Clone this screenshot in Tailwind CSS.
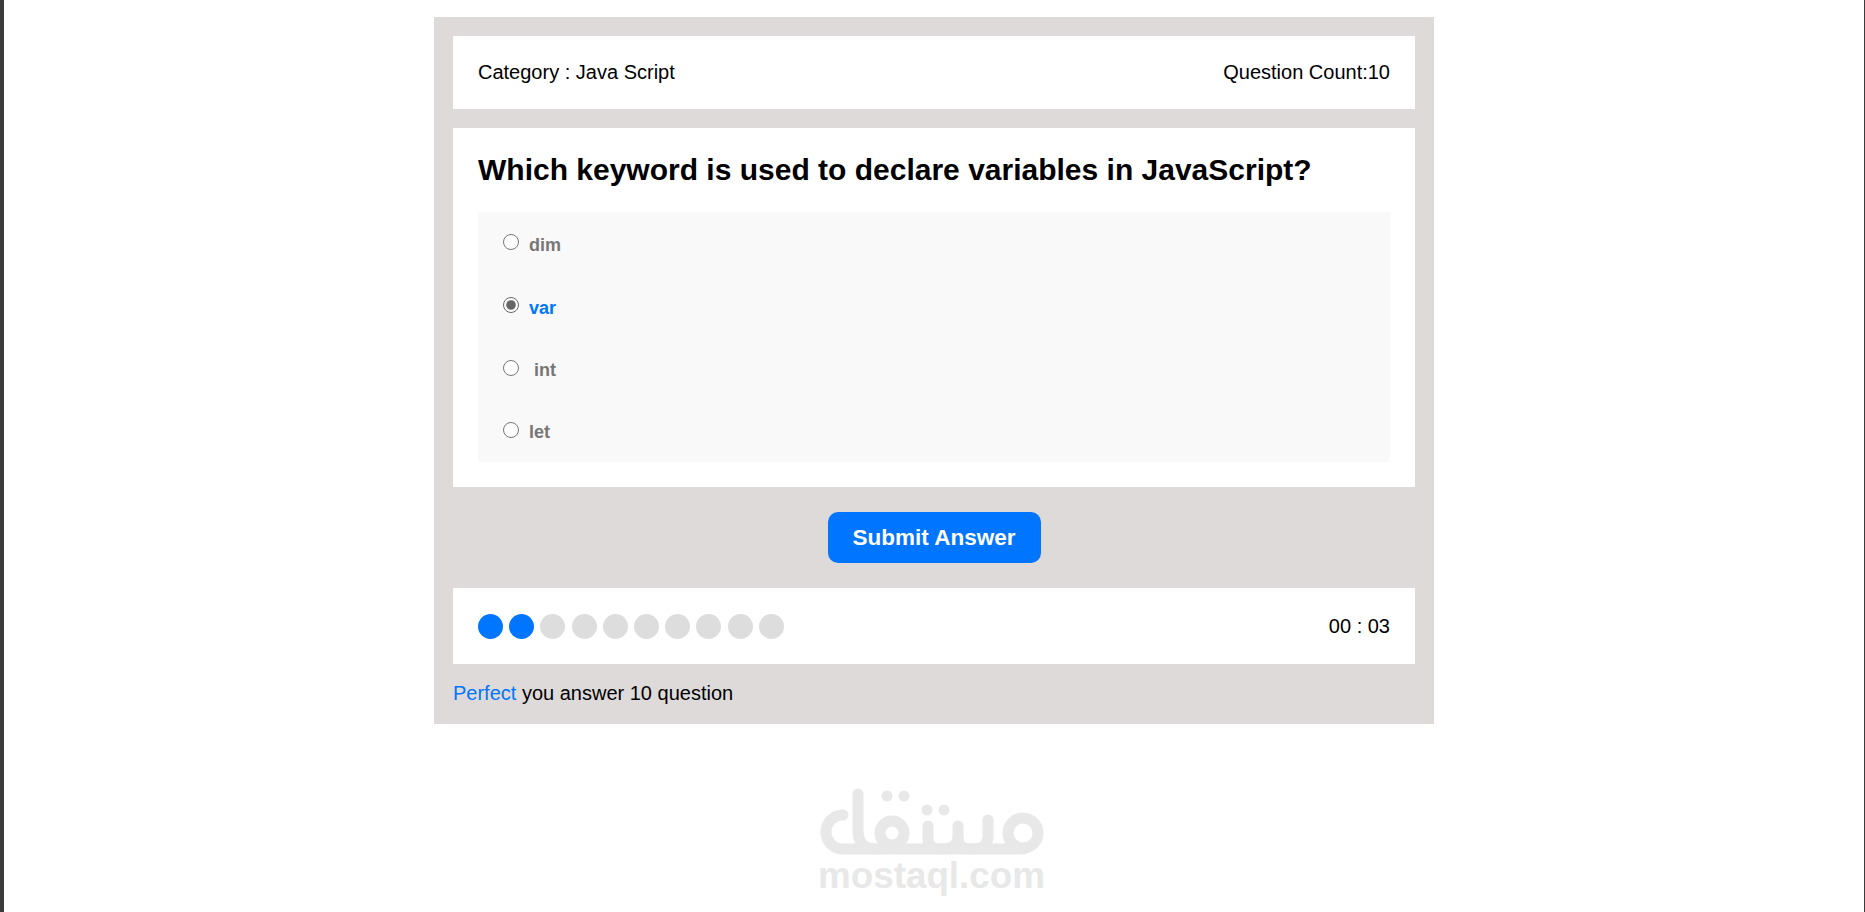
<!doctype html>
<html>
<head>
<meta charset="utf-8">
<script src="https://cdn.jsdelivr.net/npm/@tailwindcss/browser@4"></script>
</head>
<body class="bg-white font-['Liberation_Sans',Arial,sans-serif]">
<div class="relative h-[912px] w-[1865px] overflow-hidden border-l-4 border-r border-[#3b3b3b] bg-white">
  <div class="mx-auto mt-[17px] w-[1000px] bg-[#dedada] p-[19px]">
    <div class="flex h-[73px] items-center justify-between bg-white px-[25px] pb-[2px] text-[20px] text-black">
      <span>Category : Java Script</span>
      <span>Question Count:10</span>
    </div>
    <div class="mt-[19px] bg-white p-[25px]">
      <h2 class="text-[30px] font-bold leading-[34px] text-black">Which keyword is used to declare variables in JavaScript?</h2>
      <div class="mt-[25px] flex h-[250px] flex-col bg-[#f9f9f9] pl-[25px] text-[18px] font-bold text-[#777]">
        <label class="flex h-[63px] items-center gap-[10px]"><input type="radio" name="a" class="-mt-[3px] h-[16px] w-[16px]"><span class="mt-[3px]">dim</span></label>
        <label class="flex h-[63px] items-center gap-[10px] text-[#0075ff]"><input type="radio" name="a" checked class="-mt-[3px] h-[16px] w-[16px] accent-[#666]"><span class="mt-[3px]">var</span></label>
        <label class="flex h-[62px] items-center gap-[10px]"><input type="radio" name="a" class="-mt-[3px] h-[16px] w-[16px]"><span class="mt-[3px] pl-[5px]">int</span></label>
        <label class="flex h-[62px] items-center gap-[10px]"><input type="radio" name="a" class="-mt-[3px] h-[16px] w-[16px]"><span class="mt-[3px]">let</span></label>
      </div>
    </div>
    <div class="flex justify-center py-[25px]">
      <button class="h-[51px] w-[213px] rounded-[10px] bg-[#0075ff] text-[22.5px] font-bold text-white">Submit Answer</button>
    </div>
    <div class="flex h-[76px] items-center justify-between bg-white px-[25px]">
      <div class="mt-[1px] flex gap-[6.2px]">
        <span class="h-[25px] w-[25px] rounded-full bg-[#0075ff]"></span>
        <span class="h-[25px] w-[25px] rounded-full bg-[#0075ff]"></span>
        <span class="h-[25px] w-[25px] rounded-full bg-[#ddd]"></span>
        <span class="h-[25px] w-[25px] rounded-full bg-[#ddd]"></span>
        <span class="h-[25px] w-[25px] rounded-full bg-[#ddd]"></span>
        <span class="h-[25px] w-[25px] rounded-full bg-[#ddd]"></span>
        <span class="h-[25px] w-[25px] rounded-full bg-[#ddd]"></span>
        <span class="h-[25px] w-[25px] rounded-full bg-[#ddd]"></span>
        <span class="h-[25px] w-[25px] rounded-full bg-[#ddd]"></span>
        <span class="h-[25px] w-[25px] rounded-full bg-[#ddd]"></span>
      </div>
      <span class="text-[20px] text-black">00 : 03</span>
    </div>
    <div class="pt-[18px] text-[20px] leading-[23px] text-black"><span class="text-[#0075ff]">Perfect</span> you answer 10 question</div>
  </div>
  <div class="absolute left-[806px] top-[780px] flex w-[250px] flex-col items-start">
    <svg width="250" height="80" viewBox="0 0 250 80" fill="none" stroke="#e8e8e8" stroke-width="11" stroke-linecap="round" stroke-linejoin="round">
      <path d="M33 35A17 17 0 0 0 33 69H213"/>
      <path d="M48 14V50Q48 69 66 69"/>
      <circle cx="82" cy="53" r="12"/>
      <circle cx="213" cy="53" r="15"/>
      <path d="M118 46V58Q118 69 130 69Q148 69 148 58V46"/>
      <path d="M148 58Q148 69 162 69Q178 69 178 56V40"/>
      <g fill="#e8e8e8" stroke="none"><circle cx="77" cy="16" r="5.5"/><circle cx="94" cy="16" r="5.5"/><circle cx="117" cy="30" r="5.5"/><circle cx="134" cy="30" r="5.5"/></g>
    </svg>
    <div class="ml-[8px] mt-[-3px] text-[36.8px] font-bold leading-[38px] text-[#e8e8e8]">mostaql.com</div>
  </div>
</div>
</body>
</html>
